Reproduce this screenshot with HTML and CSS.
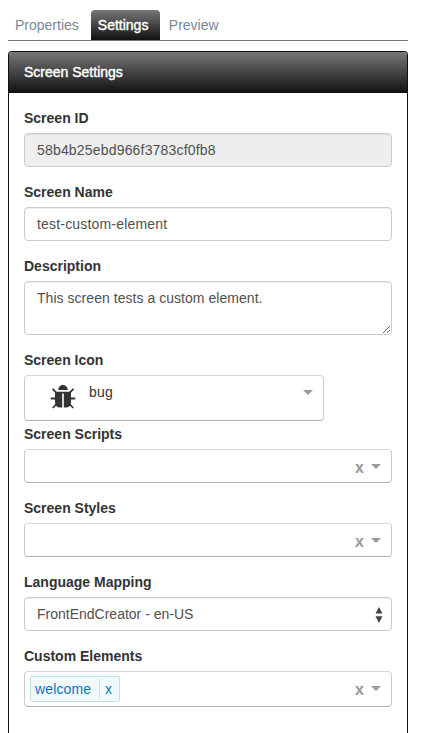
FILE: index.html
```html
<!DOCTYPE html>
<html lang="en">
<head>
<meta charset="utf-8">
<title>Screen Settings</title>
<link rel="stylesheet" href="styles.css">
</head>
<body>
<nav class="tabs">
  <a class="tab">Properties</a>
  <a class="tab active">Settings</a>
  <a class="tab">Preview</a>
</nav>
<section class="panel">
  <header class="panel-heading">Screen Settings</header>
  <form class="panel-body">
    <div class="group">
      <label for="sid">Screen ID</label>
      <input id="sid" class="control spaced" type="text" value="58b4b25ebd966f3783cf0fb8" readonly>
    </div>
    <div class="group">
      <label for="sname">Screen Name</label>
      <input id="sname" class="control spaced" type="text" value="test-custom-element">
    </div>
    <div class="group">
      <label for="desc">Description</label>
      <textarea id="desc" class="control area">This screen tests a custom element.</textarea>
    </div>
    <div class="group tight">
      <label>Screen Icon</label>
      <div class="picker icon-picker">
        <svg class="bug" width="26" height="26" viewBox="0 0 26 26">
          <path d="M8.200 6a4.800 5 0 0 1 9.600 0z"/>
          <path d="M5 7.700h16V18q0 5.500-5.500 5.500H13.800V9.500h-1.600v14H10.500Q5 23.500 5 18z"/>
          <path class="legs" d="M2.500 4.800 6 8.300M23.500 4.800 20 8.300M.8 14.500H6M20 14.500h5.200M6.500 20l-3.700 4M19.500 20l3.700 4"/>
        </svg>
        <span class="icon-name">bug</span>
        <i class="caret"></i>
      </div>
    </div>
    <div class="group">
      <label>Screen Scripts</label>
      <div class="picker"><span class="clear">x</span><i class="caret"></i></div>
    </div>
    <div class="group">
      <label>Screen Styles</label>
      <div class="picker"><span class="clear">x</span><i class="caret"></i></div>
    </div>
    <div class="group">
      <label>Language Mapping</label>
      <div class="control select"><span>FrontEndCreator - en-US</span>
        <svg width="8" height="16" viewBox="0 0 8 16"><path d="M.5 6.500 4 0l3.500 6.500zM.5 9.300h7L4 16z"/></svg>
      </div>
    </div>
    <div class="group">
      <label>Custom Elements</label>
      <div class="picker tags">
        <span class="tag"><span class="tag-name">welcome</span><span class="tag-x">x</span></span>
        <span class="clear">x</span><i class="caret"></i>
      </div>
    </div>
  </form>
</section>
</body>
</html>
```
FILE: styles.css
```css
* { box-sizing: border-box; }
body {
  margin: 0;
  padding: 10px 23px 0 8px;
  background: #fff;
  color: #333;
  font: 14px/20px "Liberation Sans", Arial, sans-serif;
}
.tabs {
  display: flex;
  height: 31px;
  margin-bottom: 10px;
  border-bottom: 1px solid #777;
}
.tab {
  height: 30px;
  padding: 5px 7px;
  margin-right: 4px;
  color: #778899;
}
.tab.active {
  margin: 0 2px 0 1px;
  width: 69px;
  color: #fff;
  border-radius: 4px 4px 0 0;
  background: linear-gradient(#777, #111);
  -webkit-text-stroke: .4px #fff;
}
.panel {
  height: 682px;
  border: 1px solid #111;
  border-bottom: 0;
  border-radius: 4px 4px 0 0;
}
.panel-heading {
  height: 41px;
  padding: 10px 15px;
  color: #fff;
  border-radius: 3px 3px 0 0;
  background: linear-gradient(#777, #111);
  -webkit-text-stroke: .4px #fff;
}
.panel-body { padding: 15px 15px 0; }
.group { margin-bottom: 15px; }
.group.tight { margin-bottom: 3px; }
label { display: block; margin-bottom: 5px; font-weight: bold; }
.control {
  display: block;
  width: 100%;
  height: 34px;
  padding: 6px 12px;
  border: 1px solid #ccc;
  border-radius: 4px;
  background: #fff;
  box-shadow: inset 0 1px 1px rgba(0, 0, 0, .075);
  color: #505050;
  font: inherit;
  outline: 0;
}
.control[readonly] { background: #eee; }
.spaced { letter-spacing: .18px; }
.area { height: 54px; resize: vertical; overflow: hidden; letter-spacing: .04px; }
.select { display: flex; justify-content: space-between; padding-right: 8px; }
.select svg { margin-top: 3px; fill: #444; }
.picker {
  display: flex;
  height: 34px;
  padding: 0 10px 0 5px;
  border: 1px solid #ccc;
  border-color: #d9d9d9 #ccc #b3b3b3;
  border-radius: 4px;
}
.caret {
  margin: 14px 0 0 7px;
  width: 0;
  height: 0;
  border: solid transparent;
  border-width: 5px 5px 0;
  border-top-color: #999;
}
.clear { margin: 8px 0 0 auto; color: #999; font-size: 16px; font-weight: bold; }
.icon-picker { width: 300px; height: 46px; }
.icon-picker .caret { margin-left: auto; }
.bug { margin: 8px 0 0 20px; fill: #333; }
.legs { fill: none; stroke: #333; stroke-width: 1.8; }
.icon-name { margin: 6px 0 0 13px; letter-spacing: .2px; }
.tags { height: 36px; }
.tag {
  display: flex;
  width: 90px;
  height: 26px;
  margin-top: 4px;
  padding: 2px 5px 2px 4px;
  border: 1px solid #c2e0f0;
  border-radius: 2px;
  background: #f2f9fc;
  color: #0878be;
}
.tag-name { flex: none; width: 65px; border-right: 1px solid #c2e0f0; letter-spacing: .15px; }
.tag-x { margin-left: 5px; }
```
